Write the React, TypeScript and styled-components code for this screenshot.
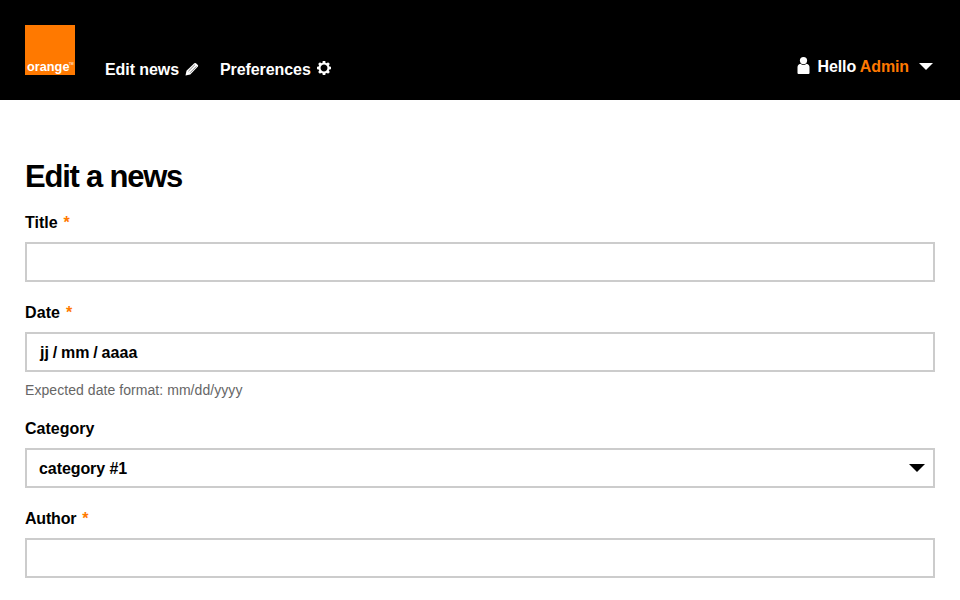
import React from "react";
import styled, { createGlobalStyle } from "styled-components";

const Global = createGlobalStyle`
  * { box-sizing: border-box; }
  body { margin: 0; background: #fff; color: #000; font: 700 16px/20px "Liberation Sans", Helvetica, Arial, sans-serif; overflow: hidden; }
`;
const Header = styled.header`
  height: 100px; background: #000; color: #fff; display: flex; padding: 25px; align-items: flex-start;
`;
const Logo = styled.svg`display: block; width: 50px; height: 50px; margin-right: 30px;`;
const NavItem = styled.a<{ $w: number }>`
  display: flex; align-items: center; justify-content: space-between; width: ${(p) => p.$w}px;
  margin: 35px 21px 0 0; white-space: nowrap; height: 20px;
`;
const Icon = styled.svg<{ $lift?: number }>`display: block; flex: none; margin-top: -${(p) => p.$lift ?? 2}px;`;
const Label = styled.span`letter-spacing: -0.08px;`;
const User = styled.div`
  margin: 32px 2px 0 auto; display: flex; align-items: center; height: 20px; white-space: nowrap;
`;
const UserName = styled.span`margin: 0 10px 0 8px; letter-spacing: -0.12px;`;
const Orange = styled.span`color: #ff7900;`;
const Main = styled.main`padding: 57px 25px 0;`;
const H1 = styled.h1`font-size: 31px; line-height: 40px; margin: 0 0 16px; letter-spacing: -1.22px;`;
const Field = styled.div``;
const Caption = styled.label<{ $ls?: number }>`display: block; height: 20px; margin-bottom: 9px; letter-spacing: ${(p) => p.$ls ?? 0}px;`;
const Star = styled.span`color: #ff7900; margin-left: 6px;`;
const Box = styled.div`
  height: 40px; margin-bottom: 21px; border: 2px solid #ccc; padding: 1px 8px 0 12px; display: flex; align-items: center; justify-content: space-between;
`;
const DateParts = styled.span`padding-left: 1px; word-spacing: -0.9px; letter-spacing: 0.1px;`;
const Help = styled.div`font-weight: 400; font-size: 14px; color: #666; height: 18px; line-height: 18px; margin: -12px 0 20px; letter-spacing: 0.06px;`;
const CaretSvg = styled.svg`display: block; margin-top: -1px;`;

const Caret = ({ w = 16, h = 8 }: { w?: number; h?: number }) => (
  <CaretSvg width={w} height={h} viewBox="0 0 16 8" preserveAspectRatio="none"><path d="M0 0h16L8 8z" fill="currentColor" /></CaretSvg>
);

const teeth = [0, 45, 90, 135, 180, 225, 270, 315];

export default function App() {
  return (
    <>
      <Global />
      <Header>
        <Logo viewBox="0 0 50 50">
          <path fill="#ff7900" d="M0 0h50v50H0z" />
          <text x="2" y="45.7" fill="#fff" fontSize="12.5" textLength="42.5" lengthAdjust="spacingAndGlyphs">orange</text>
          <text x="43.8" y="39.6" fill="#fff" fontSize="3.4" fontWeight="400">TM</text>
        </Logo>
        <NavItem $w={94}>
          <Label>Edit news</Label>
          <Icon width="14" height="14" viewBox="0 0 14 14">
            <path d="M.5 13.5l1-4.8 7.8-7.5q.8-.6 1.7.1l1.8 1.7q.7.8.1 1.6L5.3 12.4z" fill="#fff" />
            <path d="M3.4 9.2l6.5-6.4M5 10.8l6.5-6.5" stroke="#000" strokeWidth=".5" />
          </Icon>
        </NavItem>
        <NavItem $w={111}>
          <Label>Preferences</Label>
          <Icon $lift={4} width="14" height="14" viewBox="-7 -7 14 14">
            <circle r="4.5" fill="none" stroke="#fff" strokeWidth="2.1" />
            {teeth.map((a) => <path key={a} d="M-1.5-4.6l.2-2.4h2.6l.2 2.4z" fill="#fff" transform={`rotate(${a})`} />)}
          </Icon>
        </NavItem>
        <User>
          <Icon $lift={3} width="13" height="18" viewBox="0 0 13 18">
            <circle cx="6.5" cy="3.6" r="3.6" fill="#fff" />
            <path d="M3.5 6.7q3 2.4 6 0 3 .5 3 3.5V16q0 1-1 1h-10q-1 0-1-1v-5.8Q.5 7.2 3.5 6.7z" fill="#fff" />
          </Icon>
          <UserName>Hello <Orange>Admin</Orange></UserName>
          <Caret w={14} h={7} />
        </User>
      </Header>
      <Main>
        <H1>Edit a news</H1>
        <Field><Caption>Title<Star>*</Star></Caption><Box /></Field>
        <Field><Caption $ls={0.1}>Date<Star>*</Star></Caption><Box><DateParts>jj / mm / aaaa</DateParts></Box><Help>Expected date format: mm/dd/yyyy</Help></Field>
        <Field><Caption>Category</Caption><Box><Label>category #1</Label><Caret /></Box></Field>
        <Field><Caption $ls={-0.2}>Author<Star>*</Star></Caption><Box /></Field>
      </Main>
    </>
  );
}
